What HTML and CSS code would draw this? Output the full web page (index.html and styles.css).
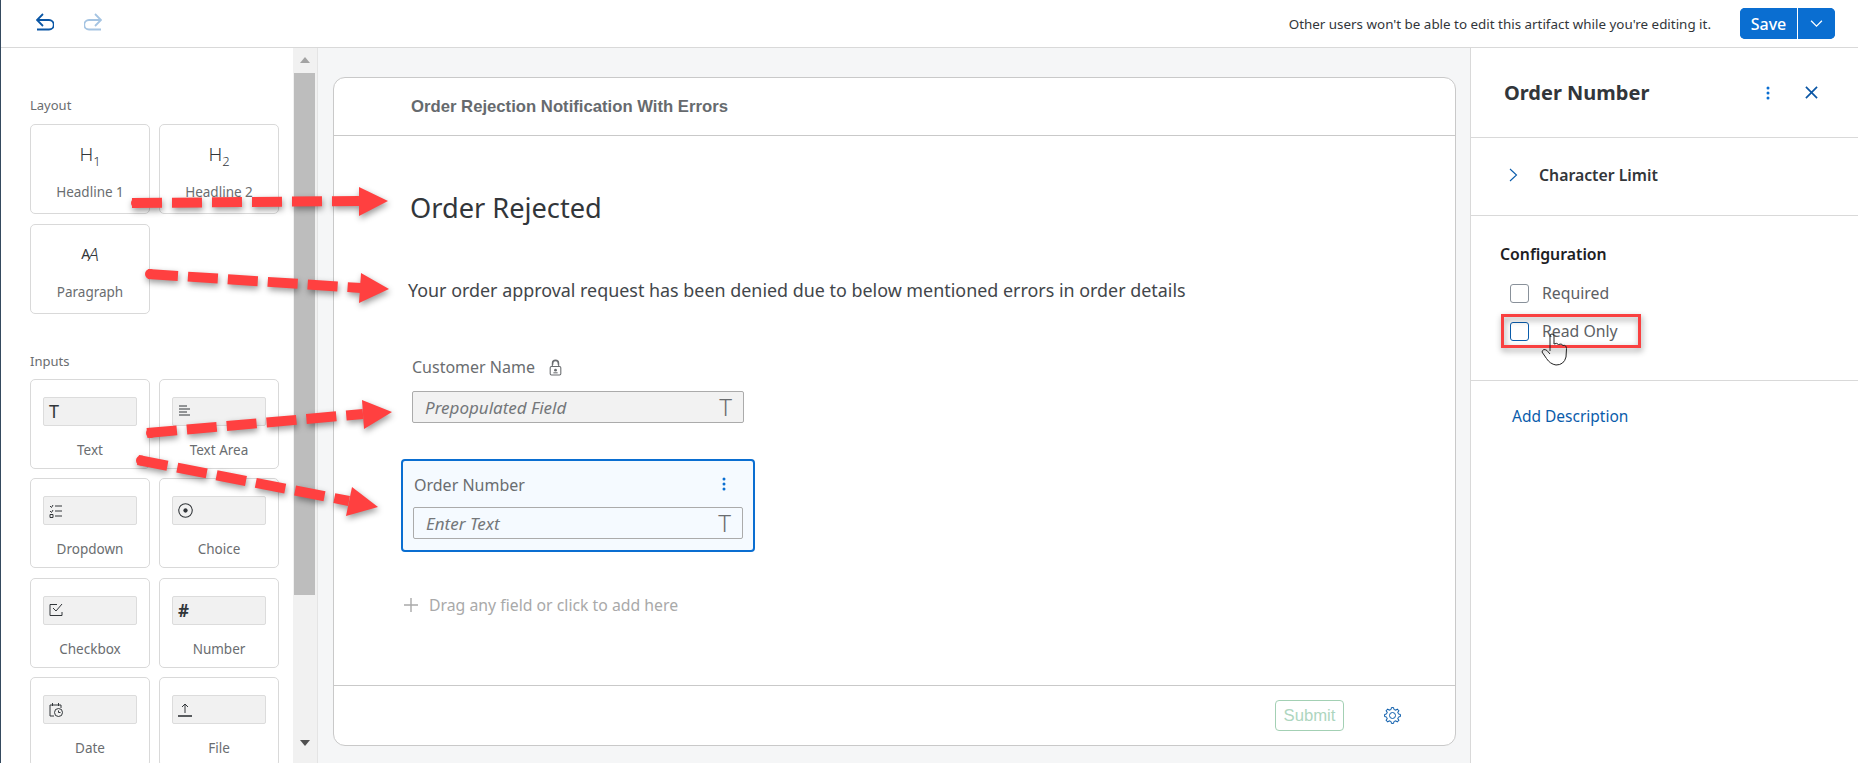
FILE: index.html
```html
<!DOCTYPE html>
<html lang="en">
<head>
<meta charset="utf-8">
<title>Order Rejection Notification With Errors</title>
<link rel="stylesheet" href="styles.css">
</head>
<body>
<div class="app">
  <header class="topbar">
    <div class="history">
      <svg class="hist-icon" viewBox="0 0 18 18"><path d="M7 1 1 7l6 6M1 7h12a3.800 3.800 0 0 1 0 9.500H1"/></svg>
      <svg class="hist-icon hist-off" viewBox="0 0 18 18"><path d="M11 1l6 6-6 6M17 7H5a3.800 3.800 0 0 0 0 9.500h12"/></svg>
    </div>
    <p class="lock-note">Other users won't be able to edit this artifact while you're editing it.</p>
    <div class="save">
      <button class="save-main">Save</button>
      <button class="save-more"><svg viewBox="0 0 16 10"><path d="M2 2l6 6 6-6"/></svg></button>
    </div>
  </header>
  <div class="workspace">
    <aside class="palette">
      <h3 class="pal-title pal-first">Layout</h3>
      <div class="tiles">
        <div class="tile"><span class="tile-glyph">H<sub>1</sub></span><span class="tile-label">Headline 1</span></div>
        <div class="tile"><span class="tile-glyph">H<sub>2</sub></span><span class="tile-label">Headline 2</span></div>
        <div class="tile"><span class="tile-glyph glyph-aa"><b>A</b><i>A</i></span><span class="tile-label">Paragraph</span></div>
      </div>
      <h3 class="pal-title pal-second">Inputs</h3>
      <div class="tiles">
        <div class="tile tile-input"><span class="mini"><span class="mini-t">T</span></span><span class="tile-label">Text</span></div>
        <div class="tile tile-input"><span class="mini"><svg class="mini-icon" viewBox="0 0 14 14"><path d="M1 2h8M1 5h11M1 8h8M1 11h11"/></svg></span><span class="tile-label">Text Area</span></div>
        <div class="tile tile-input"><span class="mini"><svg class="mini-icon" viewBox="0 0 14 14"><path d="M1 2l1.500 1.500L4 1M1 7l1.500 1.500L4 6M1 10.500h3v3H1zM6 2h7M6 7h7M6 12h7"/></svg></span><span class="tile-label">Dropdown</span></div>
        <div class="tile tile-input"><span class="mini"><svg class="mini-icon mini-radio" viewBox="0 0 14 14"><circle cx="7" cy="7" r="6.300"/><circle class="solid" cx="7" cy="7" r="2"/></svg></span><span class="tile-label">Choice</span></div>
        <div class="tile tile-input"><span class="mini"><svg class="mini-icon" viewBox="0 0 14 14"><path d="M8 1.500H1v11h12V9M4 5l3 3 6-7"/></svg></span><span class="tile-label">Checkbox</span></div>
        <div class="tile tile-input"><span class="mini"><span class="mini-hash">#</span></span><span class="tile-label">Number</span></div>
        <div class="tile tile-input"><span class="mini"><svg class="mini-icon" viewBox="0 0 14 14"><path d="M5 13H1V2h11v3M3.500 0v3M9.500 0v3"/><circle cx="9.500" cy="9.500" r="4"/><path d="M9.500 7.500v2h2"/></svg></span><span class="tile-label">Date</span></div>
        <div class="tile tile-input"><span class="mini"><svg class="mini-icon" viewBox="0 0 14 14"><path d="M7 10V1M4 4l3-3 3 3"/><path class="thick" d="M0 13h14"/></svg></span><span class="tile-label">File</span></div>
      </div>
    </aside>
    <div class="scrollbar">
      <span class="sb-up"></span>
      <span class="sb-thumb"></span>
      <span class="sb-down"></span>
    </div>
    <main class="stage">
      <section class="card">
        <div class="card-head">Order Rejection Notification With Errors</div>
        <div class="card-body">
          <h1 class="form-title">Order Rejected</h1>
          <p class="form-text">Your order approval request has been denied due to below mentioned errors in order details</p>
          <div class="field field-plain">
            <div class="field-label">Customer Name
              <svg class="lock" viewBox="0 0 12 16"><path d="M3 7V4a3 3 0 0 1 6 0v3M3.500 5.500V4a2.500 2.500 0 0 1 5 0v1.500"/><rect x="1" y="7" width="10" height="8" rx="1.200"/><circle class="solid" cx="6" cy="10.500" r="1.300"/><path d="M4 13h4"/></svg>
            </div>
            <div class="input input-ro"><span>Prepopulated Field</span><span class="input-t">T</span></div>
          </div>
          <div class="field field-selected">
            <div class="field-label">Order Number
              <svg class="dots" viewBox="0 0 4 14"><circle cx="2" cy="2" r="1.500"/><circle cx="2" cy="7" r="1.500"/><circle cx="2" cy="12" r="1.500"/></svg>
            </div>
            <div class="input"><span>Enter Text</span><span class="input-t">T</span></div>
          </div>
          <div class="add-row">
            <svg class="plus" viewBox="0 0 14 14"><path d="M7 0v14M0 7h14"/></svg>
            <span>Drag any field or click to add here</span>
          </div>
        </div>
        <div class="card-foot">
          <button class="submit">Submit</button>
          <svg class="gear" viewBox="-9.500 -9.500 19 19">
            <defs><path id="tooth" d="M-2.370-5.730-1.390-6.040-1.110-7.920H1.110L1.390-6.040 2.370-5.730"/></defs>
            <use href="#tooth"/><use href="#tooth" transform="rotate(45)"/><use href="#tooth" transform="rotate(90)"/><use href="#tooth" transform="rotate(135)"/><use href="#tooth" transform="rotate(180)"/><use href="#tooth" transform="rotate(225)"/><use href="#tooth" transform="rotate(270)"/><use href="#tooth" transform="rotate(315)"/>
            <circle r="3"/>
          </svg>
        </div>
      </section>
    </main>
    <aside class="props">
      <div class="props-head">
        <h2 class="props-title">Order Number</h2>
        <svg class="dots" viewBox="0 0 4 14"><circle cx="2" cy="2" r="1.500"/><circle cx="2" cy="7" r="1.500"/><circle cx="2" cy="12" r="1.500"/></svg>
        <svg class="close" viewBox="0 0 14 14"><path d="M1 1l12 12M13 1 1 13"/></svg>
      </div>
      <div class="props-limit">
        <svg class="chev" viewBox="0 0 9 14"><path d="M1 1l6.500 6L1 13"/></svg>
        <span>Character Limit</span>
      </div>
      <div class="props-config">
        <h4 class="config-title">Configuration</h4>
        <label class="check"><span class="box"></span>Required</label>
        <label class="check"><span class="box box-hover"></span>Read Only</label>
      </div>
      <a class="add-desc">Add Description</a>
    </aside>
  </div>
  <svg class="marks" viewBox="0 0 1858 763">
    <g class="shaft">
      <path d="M132 203 359 201"/>
      <path d="M148 274 361 288"/>
      <path d="M147 433 363 414"/>
      <path d="M138 460 349 501"/>
    </g>
    <g class="head">
      <circle cx="136" cy="203" r="5"/>
      <circle cx="150" cy="274" r="5"/>
      <circle cx="151" cy="433" r="5"/>
      <circle cx="141" cy="460.500" r="5"/>
      <path d="M359 187 388 201 359 216Z"/>
      <path d="M361 273 389 289 359 303Z"/>
      <path d="M362 400 392 412 364 429Z"/>
      <path d="M352 487 378 507 346 516Z"/>
    </g>
    <rect class="redbox" x="1502.500" y="315.500" width="137" height="31"/>
  </svg>
  <svg class="hand" viewBox="0 0 28 34"><path d="M9 19V4a2 2 0 0 1 4 0v8q3-1.500 4.500.5 3-1.500 4.500 1 3-1 3.500 3L25 25q-2 8-10 8-6-1-9.500-6.500L1 20q1-4 5-1.500L9 22"/></svg>
</div>
</body>
</html>
```
FILE: styles.css
```css
* { box-sizing: border-box; }
html, body { margin: 0; height: 100%; overflow: hidden; background: #fff; }
body { font-family: "Noto Sans", "Liberation Sans", sans-serif; color: #32363a; }
h1, h2, h3, h4, p { margin: 0; font-weight: normal; }
button { font: inherit; border: 0; padding: 0; }

.app { position: relative; width: 1858px; height: 763px; display: flex; flex-direction: column; border-left: 1px solid #354a5f; }

.topbar { height: 48px; flex: none; display: flex; align-items: center; border-bottom: 1px solid #d9d9d9; padding-left: 35px; padding-right: 23px; }
.history { display: flex; gap: 30px; margin-bottom: 3px; }
.hist-icon { width: 18px; height: 18px; fill: none; stroke: #0a56a5; stroke-width: 1.800; }
.hist-off { stroke: #a5c4e2; }
.lock-note { margin-left: auto; font-size: 13.400px; color: #32363a; }
.save { display: flex; margin-left: 29px; margin-bottom: 0; height: 31px; border-radius: 5px; overflow: hidden; background: #0a6ed1; }
.save-main { width: 58px; background: #0a6ed1; color: #fff; font-size: 16px; font-weight: 500; border-right: 1px solid #fff; }
.save-more { width: 37px; background: #0a6ed1; display: flex; align-items: center; justify-content: center; }
.save-more svg { width: 15px; height: 9px; fill: none; stroke: #fff; stroke-width: 1.400; }

.workspace { flex: 1; min-height: 0; display: flex; }

.palette { width: 292px; flex: none; overflow: hidden; padding-left: 29px; }
.pal-title { font-size: 13px; line-height: 18px; color: #6a6d70; }
.pal-first { margin-top: 48px; margin-bottom: 10px; }
.pal-second { margin-top: 38px; margin-bottom: 9px; }
.tiles { display: grid; grid-template-columns: 120px 120px; grid-auto-rows: 90px; column-gap: 9px; row-gap: 9.500px; }
.tile { display: flex; flex-direction: column; align-items: center; border: 1px solid #d9d9d9; border-radius: 5px; background: #fff; }
.tile-glyph { height: 22px; margin-top: 18px; font-size: 19px; line-height: 22px; font-weight: 300; color: #32363a; }
.tile-glyph sub { font-size: 13px; line-height: 0; }
.glyph-aa { display: flex; align-items: center; }
.glyph-aa b { font-size: 14px; }
.glyph-aa i { font-size: 19px; margin-left: -2px; font-weight: 300; }
.tile-label { margin-top: 18px; font-size: 13.500px; line-height: 18px; color: #6a6d70; }
.tile-input .tile-label { margin-top: 15px; }
.mini { align-self: stretch; height: 29px; margin: 17px 12px 0; padding-left: 5px; display: flex; align-items: center; background: #f1f1f1; border: 1px solid #dcdcdc; border-radius: 2px; }
.mini-t { font-size: 18px; line-height: 1; font-weight: 400; color: #32363a; }
.mini-hash { font-size: 17px; line-height: 1; font-weight: 700; color: #32363a; }
.mini-icon { width: 14px; height: 14px; fill: none; stroke: #32363a; stroke-width: 1; }
.mini-radio { width: 15px; height: 15px; }
.mini-icon .solid { fill: #32363a; stroke: none; }
.mini-icon .thick { stroke-width: 1.600; }

.scrollbar { width: 25px; flex: none; display: flex; flex-direction: column; align-items: center; background: #f1f1f1; border-right: 1px solid #e4e4e4; padding-right: 1px; }
.sb-up { width: 0; height: 0; margin: 9px 0 10px; border: 5.500px solid transparent; border-top: 0; border-bottom: 6px solid #a3a3a3; }
.sb-thumb { width: 21px; height: 522px; background: #bdbdbd; }
.sb-down { width: 0; height: 0; margin-top: 145px; border: 5.500px solid transparent; border-bottom: 0; border-top: 6px solid #505050; }

.stage { flex: 1; min-width: 0; background: #f5f6f7; padding: 29px 14px 17px 15px; display: flex; }
.card { flex: 1; display: flex; flex-direction: column; background: #fff; border: 1px solid #c9c9c9; border-radius: 12px; }
.card-head { height: 58px; flex: none; display: flex; align-items: center; padding-left: 77px; border-bottom: 1px solid #c9c9c9; font-family: "Liberation Sans", Arial, sans-serif; font-weight: 700; font-size: 16.700px; color: #666a6e; }
.card-body { flex: 1; min-height: 0; padding-left: 67px; }
.form-title { margin-top: 52px; margin-left: 9px; font-size: 27.200px; line-height: 40px; color: #32363a; }
.form-text { margin-top: 50px; margin-left: 7px; font-size: 17.900px; line-height: 24px; color: #42464a; }
.field { display: flex; flex-direction: column; }
.field-plain { margin-top: 55px; margin-left: 11px; width: 332px; }
.field-label { display: flex; align-items: center; font-size: 16px; line-height: 21px; color: #6a6d70; }
.lock { width: 13px; height: 17px; margin-left: 14px; fill: none; stroke: #6a6d70; stroke-width: 1; }
.lock .solid { fill: #6a6d70; stroke: none; }
.input { height: 32px; display: flex; align-items: center; justify-content: space-between; padding: 0 11px 0 12px; border: 1px solid #ababab; border-radius: 2px; font-size: 17px; font-style: italic; color: #74777a; }
.field-plain .input { margin-top: 13px; }
.input-ro { background: #f2f2f2; }
.input-t { font-style: normal; font-size: 24px; font-weight: 300; color: #6a6d70; line-height: 1; }
.field-selected { width: 354px; height: 93px; margin-top: 36px; padding: 14px 10px 0 10px; background: #f5faff; border: 2px solid #0a6ed1; border-radius: 4px; }
.field-selected .field-label { justify-content: space-between; padding-left: 1px; padding-right: 17px; }
.field-selected .dots { margin-top: -4px; }
.field-selected .input { margin-top: 11px; background: transparent; }
.dots { width: 4px; height: 14px; fill: #0a6ed1; }
.add-row { display: flex; align-items: center; margin-top: 41px; margin-left: 3px; font-size: 15.800px; line-height: 24px; color: #a9a9a9; }
.plus { width: 14px; height: 14px; margin-right: 11px; fill: none; stroke: #a9a9a9; stroke-width: 1.400; }
.card-foot { height: 60px; flex: none; display: flex; align-items: center; justify-content: flex-end; padding-right: 53px; gap: 39px; border-top: 1px solid #c9c9c9; }
.submit { width: 69px; height: 31px; background: #fff; border: 1px solid #a3d0b4; border-radius: 4px; font-family: "Liberation Sans", Arial, sans-serif; font-size: 16.700px; color: #aed6bf; }
.gear { width: 19px; height: 19px; fill: none; stroke: #0a5cab; stroke-width: 1; }

.props { width: 388px; flex: none; display: flex; flex-direction: column; border-left: 1px solid #d9d9d9; background: #fff; }
.props-head { height: 90px; flex: none; display: flex; align-items: center; padding-left: 33px; padding-right: 40px; border-bottom: 1px solid #d9d9d9; }
.props-title { font-size: 20px; font-weight: 700; color: #32363a; margin-right: auto; }
.props-head .dots { margin-right: 35px; }
.close { width: 13px; height: 13px; fill: none; stroke: #0a56a5; stroke-width: 1.800; }
.props-limit { height: 78px; flex: none; display: flex; align-items: center; padding-left: 38px; padding-bottom: 4px; border-bottom: 1px solid #d9d9d9; font-size: 15.800px; font-weight: 600; color: #32363a; }
.chev { width: 9px; height: 14px; margin-right: 21px; fill: none; stroke: #0a5cab; stroke-width: 1.100; }
.props-config { height: 165px; flex: none; padding-top: 28px; padding-left: 29px; border-bottom: 1px solid #d9d9d9; }
.config-title { font-size: 15.800px; line-height: 20px; font-weight: 600; color: #1d2023; margin-bottom: 10px; }
.check { display: flex; align-items: center; height: 38px; margin-left: 10px; font-size: 15.800px; color: #5c6064; }
.box { width: 19px; height: 19px; margin-right: 13px; background: #fff; border: 1px solid #89919a; border-radius: 3px; }
.box-hover { border-color: #0a5cab; }
.add-desc { margin-top: 24px; margin-left: 41px; font-size: 15.500px; line-height: 22px; color: #0a5cab; }

.marks { position: absolute; left: -1px; top: 0; width: 1858px; height: 763px; pointer-events: none; filter: drop-shadow(1px 3px 3px rgba(0, 0, 0, .4)); }
.shaft path { fill: none; stroke: #ff4040; stroke-width: 10; stroke-dasharray: 30 10; }
.head { fill: #ff4040; }
.redbox { fill: none; stroke: #f94040; stroke-width: 3; }
.hand { position: absolute; left: 1540px; top: 332px; width: 28px; height: 34px; fill: none; stroke: #222; stroke-width: 1; pointer-events: none; }
```
